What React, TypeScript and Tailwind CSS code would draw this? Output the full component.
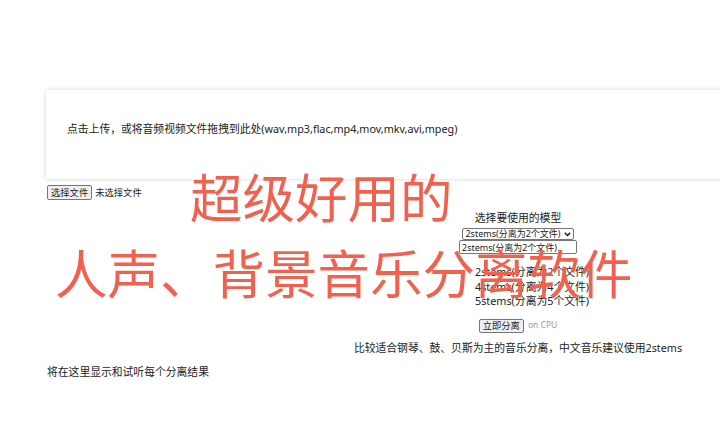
import { useState } from "react";

const MODELS = ["2stems(分离为2个文件)", "4stems(分离为4个文件)", "5stems(分离为5个文件)"];

const body = { fontFamily: '"Noto Sans", "Noto Sans CJK SC", sans-serif' };
const headline = { fontFamily: '"Noto Sans CJK SC", "Noto Sans CJK JP", serif' };

const Chevron = () => (
  <svg width="7" height="5" viewBox="0 0 7 5" className="ml-[3px] shrink-0">
    <path d="M0.8 0.8 L3.5 3.6 L6.2 0.8" fill="none" stroke="#111" strokeWidth="1.4" />
  </svg>
);

const App = () => {
  const [model, setModel] = useState(MODELS[0]);

  return (
    <div className="relative w-[720px] h-[441px] overflow-hidden bg-white text-[#222] pt-[90px]" style={body}>
      {/* drop zone */}
      <div className="ml-[46px] h-[89px] w-[720px] bg-white shadow-[0_0_4px_rgba(0,0,0,0.18)] pt-[32px] pl-[21px] text-[10.8px] leading-[14px]">
        点击上传，或将音频视频文件拖拽到此处(wav,mp3,flac,mp4,mov,mkv,avi,mpeg)
      </div>

      <div className="ml-[47px] mt-[6px] flex items-center h-[15px] text-[9.3px]">
        <button className="h-[15px] px-[3px] leading-[13px] bg-[#efefef] border border-[#767676] rounded-[2px]">选择文件</button>
        <span className="ml-[3px]">未选择文件</span>
      </div>

      <div className="ml-[318px] w-[400px] text-center">
        <div className="mt-[11px] text-[10.8px] leading-[14px]">选择要使用的模型</div>

        <div className="mt-[3px] flex justify-center">
          <div className="h-[12px] px-[2px] flex items-center whitespace-nowrap border border-[#767676] rounded-[2px] text-[9px] leading-[10px]">
            <span>{model}</span>
            <Chevron />
          </div>
        </div>

        <div className="flex justify-center">
          <input
            value={model}
            onChange={(e) => setModel(e.target.value)}
            className="h-[14px] w-[118px] border border-[#767676] rounded-[2px] px-[2px] text-[9px] leading-[12px] outline-none"
          />
        </div>

        <ul className="mt-[11px] pl-[157px] text-left text-[10.8px] leading-[14.5px] whitespace-nowrap">
          {MODELS.map((m) => (
            <li key={m} onClick={() => setModel(m)}>
              {m}
            </li>
          ))}
        </ul>

        <div className="mt-[10px] flex items-center justify-center h-[14px]">
          <button className="h-[14px] px-[3px] leading-[12px] bg-[#efefef] border border-[#767676] rounded-[2px] text-[9.3px]">立即分离</button>
          <span className="ml-[4px] text-[8.5px] text-[#999]">on CPU</span>
        </div>

        <div className="mt-[8px] text-[10.8px] leading-[14px]">比较适合钢琴、鼓、贝斯为主的音乐分离，中文音乐建议使用2stems</div>
      </div>

      <div className="ml-[47px] mt-[10px] text-[10.8px] leading-[14px]">将在这里显示和试听每个分离结果</div>

      {/* promo caption laid over the page */}
      <div className="absolute left-[190px] top-[169px] text-[52.5px] leading-[52px] text-[#f0624f] whitespace-nowrap pointer-events-none" style={headline}>
        超级好用的
      </div>
      <div className="absolute left-[55px] top-[245px] text-[52.5px] leading-[52px] text-[#f0624f] whitespace-nowrap pointer-events-none" style={headline}>
        人声、背景音乐分离软件
      </div>
    </div>
  );
};

export default App;
